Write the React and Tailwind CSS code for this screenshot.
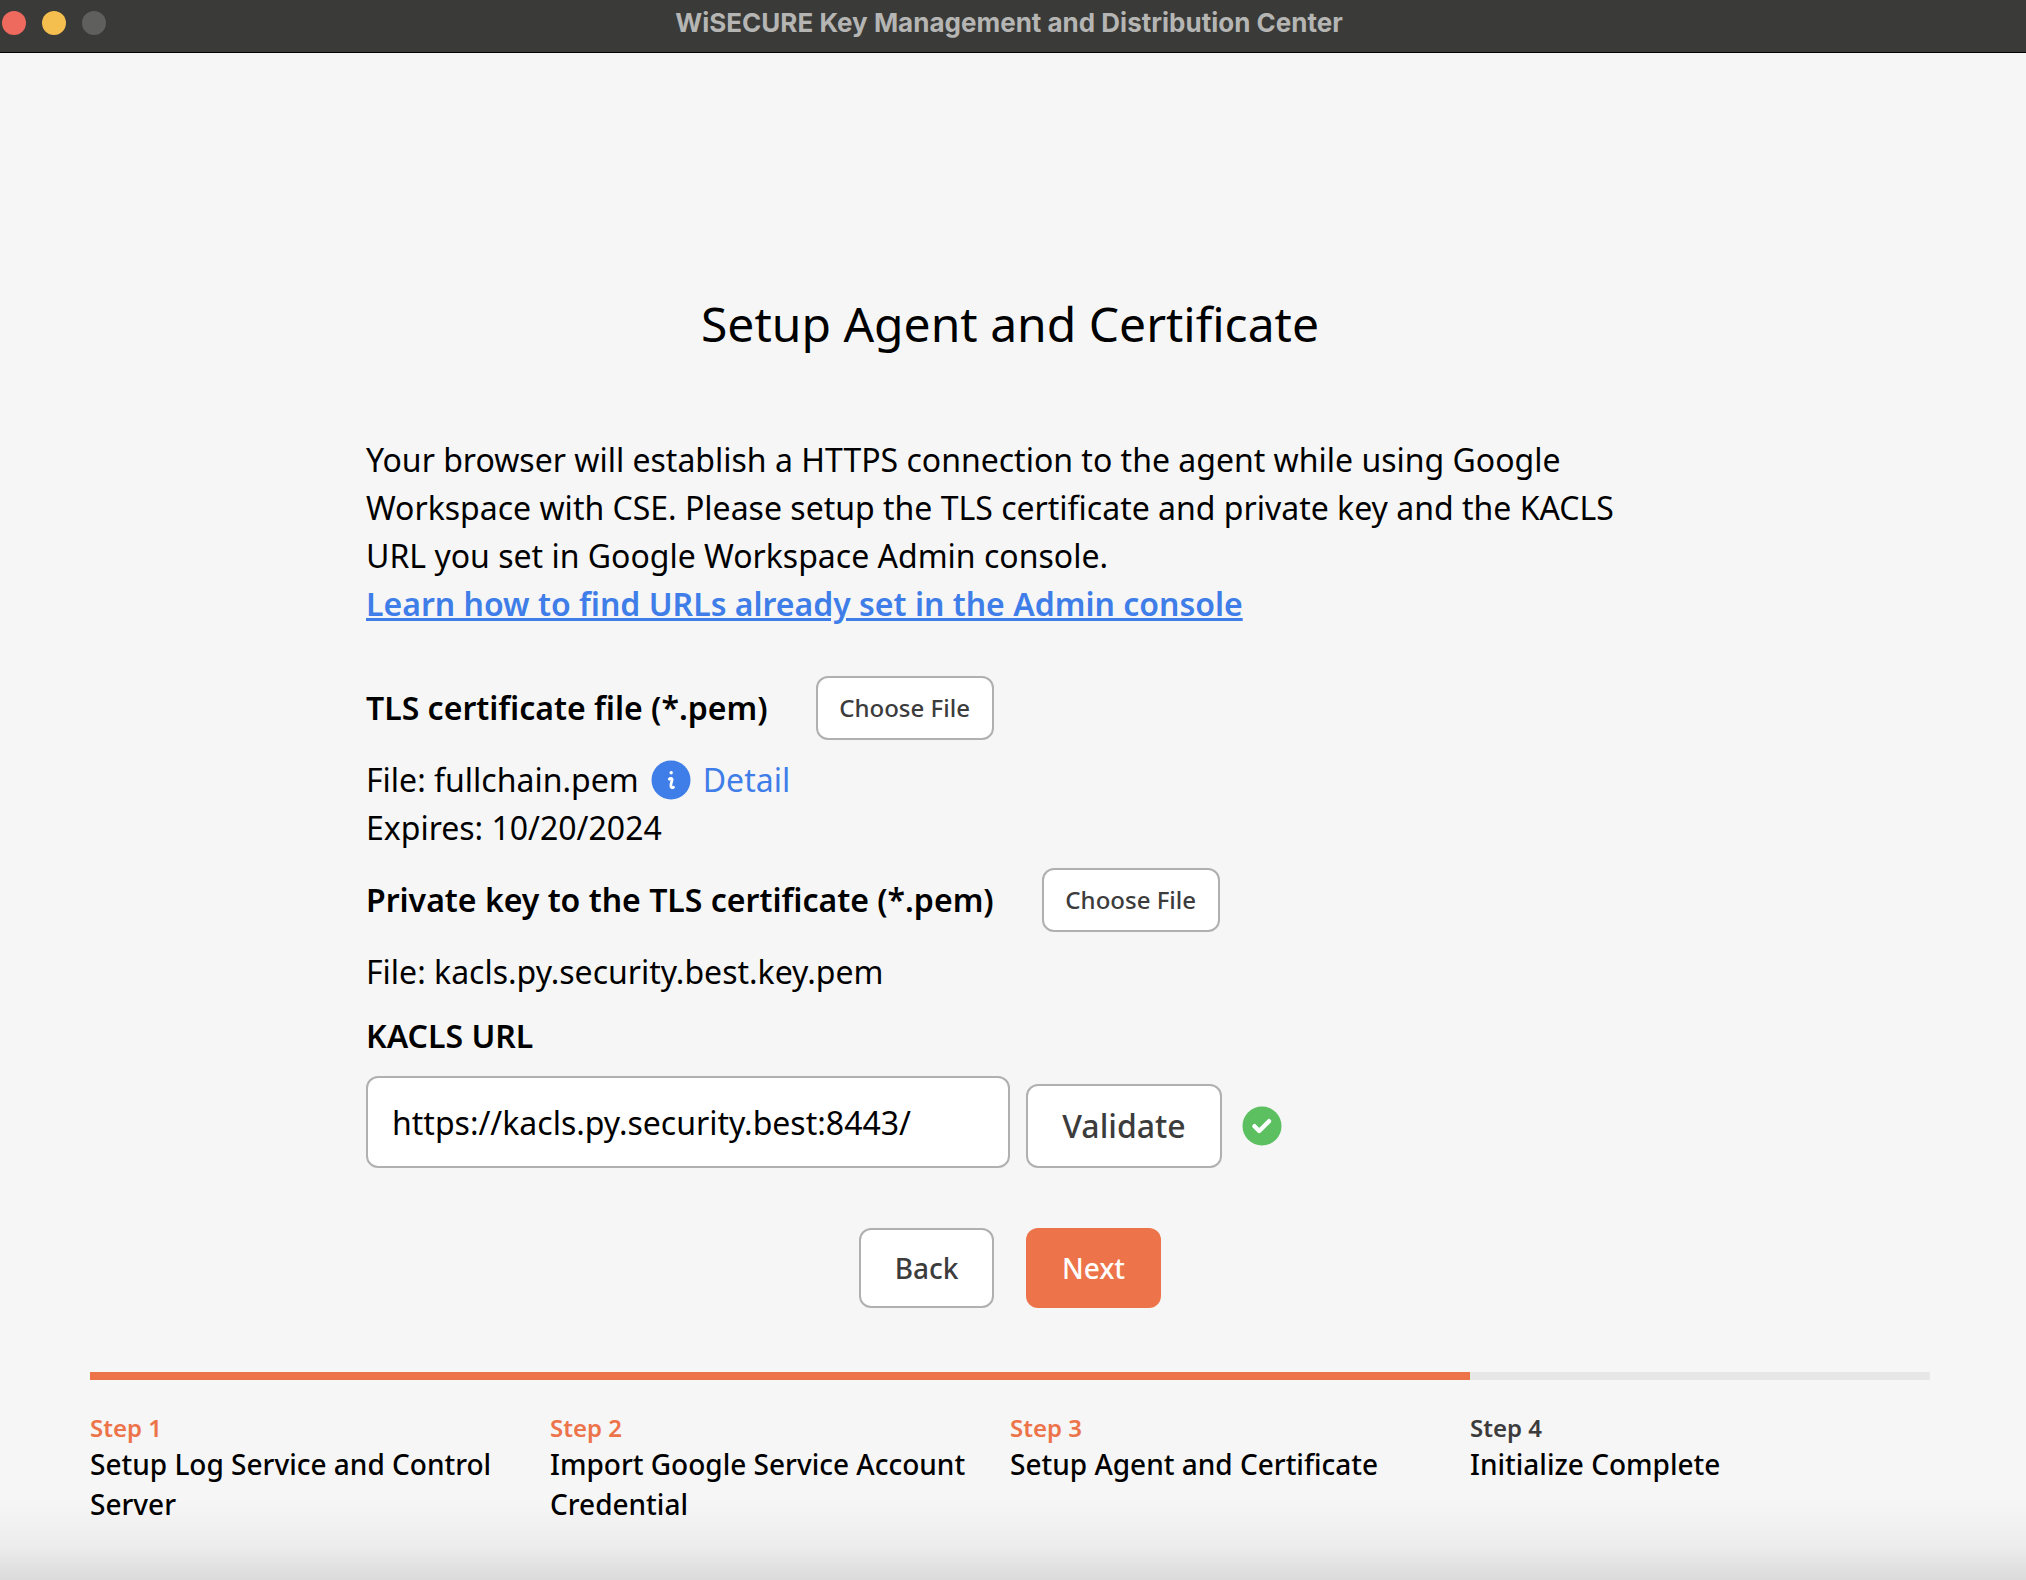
const steps = [
  { label: "Step 1", name: "Setup Log Service and Control Server", done: true },
  { label: "Step 2", name: "Import Google Service Account Credential", done: true },
  { label: "Step 3", name: "Setup Agent and Certificate", done: true },
  { label: "Step 4", name: "Initialize Complete", done: false },
];

function TitleBar() {
  return (
    <header className="grid h-[53px] grid-cols-[120px_1fr_128px] items-center border-b border-black bg-[#3a3a38] pb-1.5">
      <div className="flex gap-4 pl-0.5">
        <button type="button" aria-label="Close" className="size-6 rounded-full bg-[#ee6a5f]" />
        <button type="button" aria-label="Minimize" className="size-6 rounded-full bg-[#f5bf4f]" />
        <button type="button" aria-label="Zoom" className="size-6 rounded-full bg-[#5f5f5d]" />
      </div>
      <div className="text-center font-['Inter',sans-serif] text-[26px] leading-8 font-bold text-[#b5b5b4]">
        WiSECURE Key Management and Distribution Center
      </div>
    </header>
  );
}

function FileRow({ label, id }) {
  return (
    <div className="flex items-center gap-12">
      <label id={id} htmlFor={`${id}-button`} className="font-semibold">{label}</label>
      <button
        id={`${id}-button`}
        type="button"
        className="h-16 w-[178px] rounded-xl border-2 border-[#b0b0b0] bg-white text-2xl font-medium text-[#3c3c3c]"
      >
        Choose File
      </button>
    </div>
  );
}

function InfoIcon() {
  return (
    <svg viewBox="0 0 40 40" className="size-10" aria-hidden="true">
      <circle cx="20" cy="20" r="19.500" fill="#3f7ee8" />
      <circle cx="20.200" cy="12.700" r="1.700" fill="#fff" />
      <path
        d="M18.200 19.200C19.200 17.800 21.400 18 21 20.200C20.700 22 19.600 24 19.900 26C20.100 27.800 21.500 28.100 22.500 27.200"
        fill="none"
        stroke="#fff"
        strokeWidth="2.800"
        strokeLinecap="round"
        strokeLinejoin="round"
      />
    </svg>
  );
}

function CheckIcon() {
  return (
    <svg viewBox="0 0 40 40" className="size-10" role="img" aria-label="Valid">
      <circle cx="20" cy="20" r="19.500" fill="#5cbf60" />
      <path d="M12.500 20.200l4.700 4.800 9.800-9.800" fill="none" stroke="#fff" strokeWidth="4.400" strokeLinecap="round" strokeLinejoin="round" />
    </svg>
  );
}

export default function App() {
  return (
    <div className="flex min-h-screen flex-col bg-[#f6f6f6] font-['Noto_Sans',sans-serif] text-black">
      <TitleBar />
      <main className="flex grow flex-col pr-24 pl-[90px]">
        <h1 className="mt-[239px] text-center text-5xl leading-[64px] font-normal">Setup Agent and Certificate</h1>

        <form className="mx-auto mt-20 w-[70%] text-[32px] leading-[48px]">
          <p>
            Your browser will establish a HTTPS connection to the agent while using Google Workspace with CSE. Please
            setup the TLS certificate and private key and the KACLS URL you set in Google Workspace Admin console.
          </p>
          <a href="#help" className="font-semibold text-[#3f7ee8] underline">
            Learn how to find URLs already set in the Admin console
          </a>

          <div className="mt-12 flex flex-col gap-4">
            <FileRow id="cert" label="TLS certificate file (*.pem)" />
            <div>
              <div className="flex items-center">
                <span>File: fullchain.pem</span>
                <a href="#detail" className="ml-3 flex items-center gap-3 text-[#3f7ee8]">
                  <InfoIcon />
                  Detail
                </a>
              </div>
              <p>Expires: 10/20/2024</p>
            </div>
            <FileRow id="key" label="Private key to the TLS certificate (*.pem)" />
            <p>File: kacls.py.security.best.key.pem</p>
            <label htmlFor="kacls-url" className="font-semibold">KACLS URL</label>
            <div className="flex items-end gap-4">
              <input
                id="kacls-url"
                type="text"
                defaultValue="https://kacls.py.security.best:8443/"
                className="h-[92px] w-1/2 rounded-xl border-2 border-[#b0b0b0] bg-white px-6"
              />
              <button
                type="button"
                className="h-[84px] w-[196px] rounded-xl border-2 border-[#b0b0b0] bg-white font-medium text-[#3c3c3c]"
              >
                Validate
              </button>
              <div className="flex h-[84px] items-center pl-1">
                <CheckIcon />
              </div>
            </div>
          </div>

          <div className="mt-[60px] flex justify-center gap-8 text-[28px] font-medium">
            <button type="button" className="h-20 w-[135px] rounded-xl border-2 border-[#b0b0b0] bg-white text-[#3c3c3c]">
              Back
            </button>
            <button type="submit" className="h-20 w-[135px] rounded-xl bg-[#ed744a] text-white">
              Next
            </button>
          </div>
        </form>

        <ol className="mt-16 grid grid-cols-4">
          {steps.map((step) => (
            <li key={step.label}>
              <div className={step.done ? "h-2 bg-[#ed744a]" : "h-2 bg-[#e7e7e7]"} />
              <div className="pt-8 pr-8">
                <div className={step.done ? "text-2xl leading-8 font-semibold text-[#ed744a]" : "text-2xl leading-8 font-semibold text-[#3c3c3c]"}>
                  {step.label}
                </div>
                <div className="text-[28px] leading-10 font-medium">{step.name}</div>
              </div>
            </li>
          ))}
        </ol>
      </main>
      <div className="pointer-events-none fixed inset-x-0 bottom-0 h-20 bg-linear-to-b from-transparent via-black/4 via-60% to-black/11" />
    </div>
  );
}
